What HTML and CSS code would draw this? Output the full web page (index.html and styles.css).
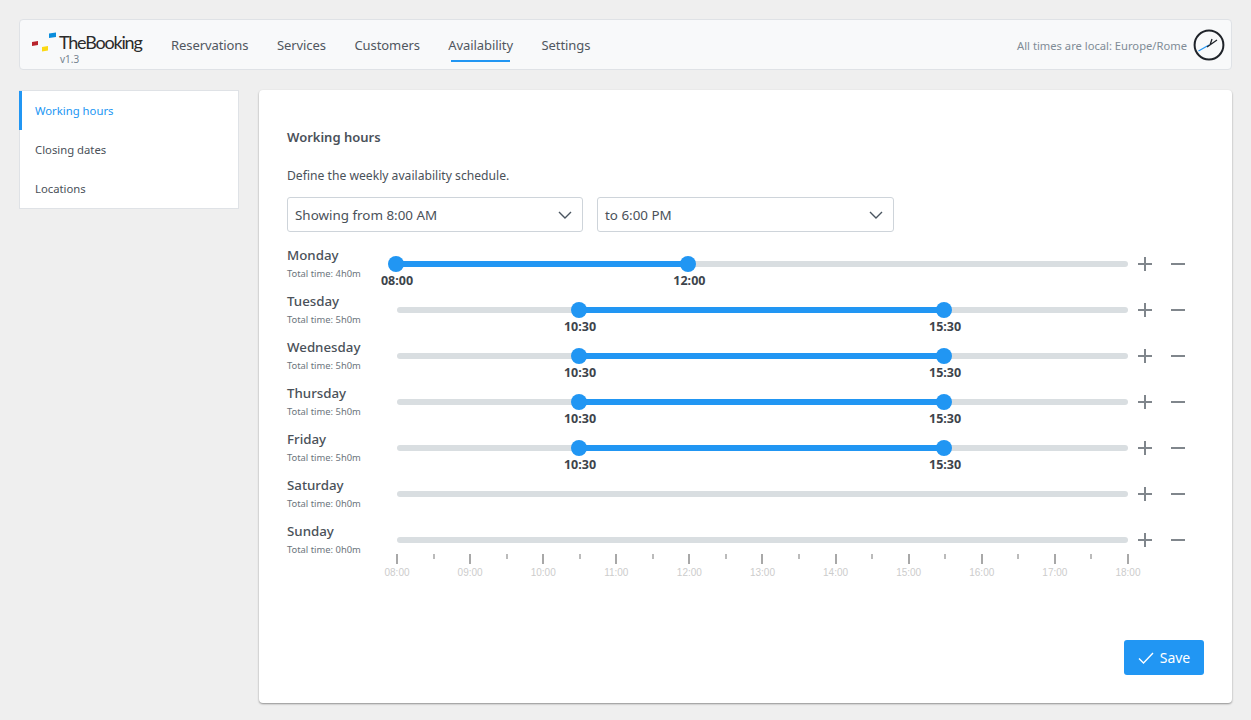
FILE: index.html
```html
<!DOCTYPE html>
<html lang="en">
<head>
<meta charset="utf-8">
<title>TheBooking - Working hours</title>
<link rel="stylesheet" href="styles.css">
</head>
<body>
<header class="navbar">
  <div class="brand">
    <svg class="brand-mark" width="26" height="20" viewBox="0 0 26 20"><polygon points="1,10 7,9 7,13 1,14" fill="#b8232c"/><polygon points="11,15 17,14 17,18.5 11,19.5" fill="#fbd914"/><polygon points="18,1.5 25,0.5 25,5 18,6" fill="#0a8ddc"/></svg>
    <div class="brand-text"><span class="brand-name">TheBooking</span><span class="brand-version">v1.3</span></div>
  </div>
  <nav class="nav">
    <a class="nav-item">Reservations</a>
    <a class="nav-item">Services</a>
    <a class="nav-item">Customers</a>
    <a class="nav-item active">Availability</a>
    <a class="nav-item">Settings</a>
  </nav>
  <div class="tz">
    <span>All times are local: Europe/Rome</span>
    <svg width="32" height="32" viewBox="0 0 32 32"><circle cx="16" cy="16" r="14.4" fill="none" stroke="#1f2329" stroke-width="2"/><path d="M5.5 22 16 16" stroke="#2196f3" stroke-width="1.2" fill="none"/><path d="M14 18 24 11M17 16 19 10" stroke="#1f2329" stroke-width="1.3" fill="none"/></svg>
  </div>
</header>
<div class="layout">
  <aside class="side">
    <a class="side-item active">Working hours</a>
    <a class="side-item">Closing dates</a>
    <a class="side-item">Locations</a>
  </aside>
  <main class="card">
    <h2 class="title">Working hours</h2>
    <p class="desc">Define the weekly availability schedule.</p>
    <div class="selects">
      <div class="select"><span>Showing from 8:00 AM</span><svg width="14" height="8" viewBox="0 0 14 8"><path d="M1 1l6 6 6-6" fill="none" stroke="#4a5560" stroke-width="1.4"/></svg></div>
      <div class="select"><span>to 6:00 PM</span><svg width="14" height="8" viewBox="0 0 14 8"><path d="M1 1l6 6 6-6" fill="none" stroke="#4a5560" stroke-width="1.4"/></svg></div>
    </div>
    <div class="rows">
      <div class="row">
        <div class="day"><div class="day-name">Monday</div><div class="day-total">Total time: 4h0m</div></div>
        <div class="slider"><div class="track"></div><div class="fill" style="left:-0.14%;width:40%"></div>
          <div class="handle" style="left:-0.14%"><b>08:00</b></div><div class="handle" style="left:39.86%"><b>12:00</b></div></div>
        <div class="actions"><span class="plus"></span><span class="minus"></span></div>
      </div>
      <div class="row">
        <div class="day"><div class="day-name">Tuesday</div><div class="day-total">Total time: 5h0m</div></div>
        <div class="slider"><div class="track"></div><div class="fill" style="left:24.9%;width:50%"></div>
          <div class="handle" style="left:24.9%"><b>10:30</b></div><div class="handle" style="left:74.84%"><b>15:30</b></div></div>
        <div class="actions"><span class="plus"></span><span class="minus"></span></div>
      </div>
      <div class="row">
        <div class="day"><div class="day-name">Wednesday</div><div class="day-total">Total time: 5h0m</div></div>
        <div class="slider"><div class="track"></div><div class="fill" style="left:24.9%;width:50%"></div>
          <div class="handle" style="left:24.9%"><b>10:30</b></div><div class="handle" style="left:74.84%"><b>15:30</b></div></div>
        <div class="actions"><span class="plus"></span><span class="minus"></span></div>
      </div>
      <div class="row">
        <div class="day"><div class="day-name">Thursday</div><div class="day-total">Total time: 5h0m</div></div>
        <div class="slider"><div class="track"></div><div class="fill" style="left:24.9%;width:50%"></div>
          <div class="handle" style="left:24.9%"><b>10:30</b></div><div class="handle" style="left:74.84%"><b>15:30</b></div></div>
        <div class="actions"><span class="plus"></span><span class="minus"></span></div>
      </div>
      <div class="row">
        <div class="day"><div class="day-name">Friday</div><div class="day-total">Total time: 5h0m</div></div>
        <div class="slider"><div class="track"></div><div class="fill" style="left:24.9%;width:50%"></div>
          <div class="handle" style="left:24.9%"><b>10:30</b></div><div class="handle" style="left:74.84%"><b>15:30</b></div></div>
        <div class="actions"><span class="plus"></span><span class="minus"></span></div>
      </div>
      <div class="row">
        <div class="day"><div class="day-name">Saturday</div><div class="day-total">Total time: 0h0m</div></div>
        <div class="slider"><div class="track"></div></div>
        <div class="actions"><span class="plus"></span><span class="minus"></span></div>
      </div>
      <div class="row">
        <div class="day"><div class="day-name">Sunday</div><div class="day-total">Total time: 0h0m</div></div>
        <div class="slider"><div class="track"></div></div>
        <div class="actions"><span class="plus"></span><span class="minus"></span></div>
      </div>
    </div>
    <div class="scale">
      <div class="tick major"><span>08:00</span></div><div class="tick"></div>
      <div class="tick major"><span>09:00</span></div><div class="tick"></div>
      <div class="tick major"><span>10:00</span></div><div class="tick"></div>
      <div class="tick major"><span>11:00</span></div><div class="tick"></div>
      <div class="tick major"><span>12:00</span></div><div class="tick"></div>
      <div class="tick major"><span>13:00</span></div><div class="tick"></div>
      <div class="tick major"><span>14:00</span></div><div class="tick"></div>
      <div class="tick major"><span>15:00</span></div><div class="tick"></div>
      <div class="tick major"><span>16:00</span></div><div class="tick"></div>
      <div class="tick major"><span>17:00</span></div><div class="tick"></div>
      <div class="tick major"><span>18:00</span></div>
    </div>
    <div class="footer">
      <button class="save"><svg width="16" height="12" viewBox="0 0 16 12"><path d="M1 6.5 5.5 11 15 1" fill="none" stroke="#fff" stroke-width="1.4"/></svg><span>Save</span></button>
    </div>
  </main>
</div>
</body>
</html>
```
FILE: styles.css
```css
* { box-sizing: border-box; }
html, body { height: 100%; }
body {
  margin: 0;
  padding: 19px 19px 0;
  background: #efefef;
  font-family: "Noto Sans", "Open Sans", sans-serif;
  color: #4a5159;
  overflow: hidden;
}
.navbar {
  height: 51px;
  display: flex;
  align-items: center;
  background: #f8f9fa;
  border: 1px solid #dfe2e6;
  border-radius: 4px;
  padding: 0 6px 0 11px;
}
.brand { display: flex; align-items: flex-start; width: 140px; flex: none; margin-top: 2px; }
.brand-mark { margin-top: 4px; margin-right: 2px; flex: none; }
.brand-text { display: flex; flex-direction: column; padding-top: 4px; }
.brand-name {
  font-family: Lato, sans-serif;
  font-size: 18px;
  line-height: 21px;
  letter-spacing: -1.2px;
  color: #2b2b2b;
}
.brand-version { font-size: 10px; line-height: 10px; color: #75838f; margin: 1px 0 0 1px; }
.nav { display: flex; gap: 28.5px; flex: 1; margin-top: 1px; }
.nav-item { position: relative; font-size: 13px; letter-spacing: -0.08px; line-height: 20px; color: #50575f; }
.nav-item.active::after {
  content: "";
  position: absolute;
  left: 3px;
  right: 3px;
  bottom: -7px;
  height: 2px;
  background: #2196f3;
}
.tz { display: flex; align-items: center; gap: 6px; font-size: 11.2px; color: #808c96; margin-top: 1px; }
.layout { display: flex; gap: 20px; margin-top: 20px; align-items: flex-start; }
.side {
  width: 220px;
  flex: none;
  background: #fff;
  border: 1px solid #dfe2e6;
  display: flex;
  flex-direction: column;
}
.side-item {
  height: 39px;
  display: flex;
  align-items: center;
  padding-left: 15px;
  font-size: 11.3px;
  color: #4a5159;
}
.side-item.active {
  color: #2196f3;
  box-shadow: inset 3px 0 0 #2196f3;
  margin-left: -1px;
  padding-left: 16px;
}
.card {
  flex: 1;
  height: 613px;
  background: #fff;
  border-radius: 4px;
  box-shadow: 0 1px 2px rgba(0, 0, 0, .4);
  padding: 37px 28px 28px;
  display: flex;
  flex-direction: column;
}
.title { margin: 0; font-size: 13px; line-height: 20px; font-weight: 600; color: #4a5159; }
.desc { margin: 19px 0 0; font-size: 12.15px; line-height: 20px; color: #4a5159; }
.selects { display: flex; gap: 14px; margin-top: 11px; }
.select {
  width: 296px;
  height: 35px;
  border: 1px solid #ced4da;
  border-radius: 3px;
  display: flex;
  align-items: center;
  justify-content: space-between;
  padding: 0 10px 0 7px;
  font-size: 13.4px;
  color: #4a5159;
}
.select + .select { width: 297px; }
.rows { display: flex; flex-direction: column; margin-top: 9px; }
.row { height: 46px; display: flex; }
.day { width: 110px; flex: none; }
.day-name { font-size: 13.3px; line-height: 18px; font-weight: 500; margin-top: 5px; }
.day-total { font-size: 9.4px; line-height: 12px; color: #6c757d; margin-top: 4px; }
.slider { position: relative; width: 731px; flex: none; height: 46px; }
.track { position: absolute; left: 0; right: 0; top: 20px; height: 6px; border-radius: 3px; background: #d9dee1; }
.fill { position: absolute; top: 20px; height: 6px; background: #2196f3; }
.handle {
  position: absolute;
  top: 15px;
  width: 16px;
  height: 16px;
  margin-left: -8px;
  border-radius: 50%;
  background: #2196f3;
}
.handle b {
  position: absolute;
  top: 17px;
  left: calc(50% + 1px);
  transform: translateX(-50%);
  font-size: 12.5px;
  line-height: 16px;
  font-weight: 700;
  color: #3d444b;
}
.actions { display: flex; align-items: center; height: 46px; gap: 19px; margin-left: 10px; }
.plus, .minus { position: relative; width: 14px; height: 14px; display: block; }
.plus::before, .minus::before { content: ""; position: absolute; left: 0; right: 0; top: 6px; height: 2px; background: #80868c; }
.plus::after { content: ""; position: absolute; top: 0; bottom: 0; left: 6px; width: 2px; background: #80868c; }
.scale { position: relative; display: flex; justify-content: space-between; width: 733px; margin: -9px 0 0 109px; height: 30px; }
.tick { position: relative; width: 2px; height: 5px; background: #bbb; }
.tick.major { height: 10px; background: #a8a8a8; }
.tick span {
  position: absolute;
  top: 13px;
  left: 50%;
  transform: translateX(-50%);
  font-family: "Liberation Sans", sans-serif;
  font-size: 10px;
  line-height: 12px;
  color: #ccc;
}
.footer { margin-top: auto; display: flex; justify-content: flex-end; }
.save {
  width: 80px;
  height: 35px;
  border: 0;
  border-radius: 3px;
  background: #2196f3;
  color: #fff;
  font-family: inherit;
  font-size: 14px;
  display: flex;
  align-items: center;
  justify-content: center;
  gap: 6px;
  padding: 0;
}
```
